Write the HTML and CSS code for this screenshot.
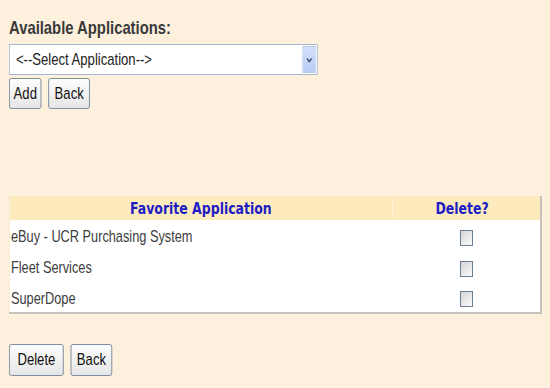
FILE: index.html
```html
<!DOCTYPE html>
<html lang="en">

<head>
    <meta charset="UTF-8">
    <title>Favorite Applications</title>
    <link rel="stylesheet" href="styles.css">
</head>

<body>

    <div class="page">
        <h2 class="narrow">Available Applications:</h2>

        <!-- Application picker -->
        <div class="select-wrap narrow">
            <select class="app-select">
                <option>&lt;--Select Application--&gt;</option>
            </select>
            <span class="select-arrow">
                <svg width="10" height="6" viewBox="0 0 10 6">
                    <path d="M2 1.5 L5 4.5 L8 1.5" fill="none" stroke="#3a4868" stroke-width="1.6" />
                </svg>
            </span>
        </div>

        <div class="btn-row narrow">
            <button class="btn btn-add">Add</button>
            <button class="btn">Back</button>
        </div>

        <!-- Favorites list -->
        <table class="fav-table">
            <thead>
                <tr>
                    <th class="col-app"><span class="cell-text center">Favorite Application</span></th>
                    <th class="col-del"><span class="cell-text center">Delete?</span></th>
                </tr>
            </thead>
            <tbody>
                <tr>
                    <td><span class="cell-text">eBuy - UCR Purchasing System</span></td>
                    <td class="col-del"><input type="checkbox" class="chk"></td>
                </tr>
                <tr>
                    <td><span class="cell-text">Fleet Services</span></td>
                    <td class="col-del"><input type="checkbox" class="chk"></td>
                </tr>
                <tr>
                    <td><span class="cell-text">SuperDope</span></td>
                    <td class="col-del"><input type="checkbox" class="chk"></td>
                </tr>
            </tbody>
        </table>

        <div class="btn-row bottom-row narrow">
            <button class="btn btn-wide">Delete</button>
            <button class="btn">Back</button>
        </div>
    </div>

</body>

</html>
```

FILE: styles.css
```css
* {
    margin: 0;
    padding: 0;
    box-sizing: border-box;
}

body {
    background-color: #fdf1de;
    font-family: 'Liberation Sans', Arial, sans-serif;
    color: #333;
}

.page {
    padding: 16px 0 0 9px;
}

/* text and controls are drawn a bit narrow */
.narrow {
    transform: scaleX(0.77);
    transform-origin: 0 0;
}

h2.narrow {
    transform: scaleX(0.78);
}

.cell-text {
    display: inline-block;
    white-space: nowrap;
    transform: scaleX(0.75);
    transform-origin: 0 50%;
}

th .cell-text.center {
    transform: scaleX(0.78);
    transform-origin: 50% 50%;
}

h2 {
    font-size: 19px;
    font-weight: bold;
    line-height: 24px;
    color: #3a3a3a;
    margin-bottom: 4px;
}

.select-wrap {
    position: relative;
    width: 401px;
    height: 31px;
}

.app-select {
    appearance: none;
    -webkit-appearance: none;
    width: 100%;
    height: 100%;
    border: 1px solid #a5b8d2;
    background-color: #fff;
    font-family: inherit;
    font-size: 17px;
    color: #222;
    padding: 0 0 0 8px;
}

.select-arrow {
    position: absolute;
    top: 2px;
    right: 2px;
    width: 18px;
    height: 27px;
    background: linear-gradient(#d3e0fb, #b8ccf5);
    border: 1px solid #bccbe8;
    display: flex;
    align-items: center;
    justify-content: center;
}

.btn-row {
    display: flex;
    gap: 9px;
    margin-top: 3px;
}

.btn {
    font-family: inherit;
    font-size: 17px;
    color: #111;
    height: 31px;
    padding: 0 7px;
    border: 1px solid #6f8196;
    border-radius: 3px;
    background: linear-gradient(#fdfdfd, #e6e6e6);
}

.btn-add {
    padding: 0 5px;
}

.btn-wide {
    padding: 0 10px;
}

.fav-table {
    margin-top: 87px;
    width: 533px;
    border-collapse: collapse;
    background-color: #fff;
    border-right: 2px solid #c5c2bb;
    border-bottom: 2px solid #c5c2bb;
    border-left: 1px solid #f6ead2;
}

.fav-table th {
    background-color: #fdebbd;
    color: #1d1dc4;
    font-family: 'DejaVu Sans', Verdana, sans-serif;
    font-size: 16px;
    font-weight: bold;
    height: 24px;
    text-align: center;
}

.fav-table th.col-app {
    width: 383px;
    border-right: 1px solid #fff3d6;
}

.fav-table th.col-del {
    padding-right: 8px;
}

.fav-table td {
    font-size: 17px;
    color: #3d3d3d;
    height: 31px;
    padding: 3px 0 0 1px;
}

.fav-table td.col-del {
    text-align: center;
    padding: 0;
}

.chk {
    appearance: none;
    -webkit-appearance: none;
    width: 13px;
    height: 16px;
    border: 1px solid #6c7e94;
    background: linear-gradient(135deg, #d5d5d5, #fbfbfb);
    vertical-align: middle;
    margin-top: 3px;
}

.bottom-row {
    margin-top: 30px;
}

.bottom-row .btn {
    height: 32px;
}
```
